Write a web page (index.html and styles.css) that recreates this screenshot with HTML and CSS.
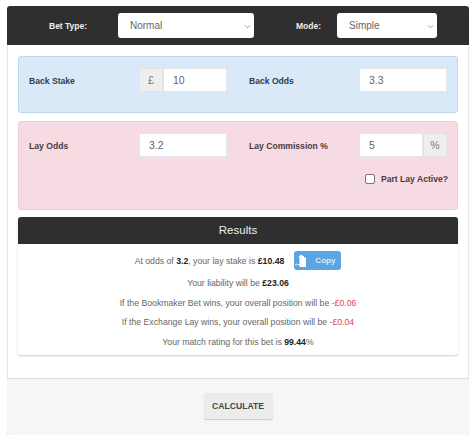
FILE: index.html
```html
<!DOCTYPE html>
<html lang="en">
<head>
    <meta charset="UTF-8">
    <title>Lay Bet Calculator</title>
    <link rel="stylesheet" href="styles.css">
</head>
<body>
    <div class="card">
        <div class="top-bar">
            <span class="top-label bet-label">Bet Type:</span>
            <div class="select bet-select">Normal
                <svg class="chevron" viewBox="0 0 8 5"><path d="M1 1l3 3 3-3" fill="none" stroke="#777" stroke-width="0.8"/></svg>
            </div>
            <span class="top-label mode-label">Mode:</span>
            <div class="select mode-select">Simple
                <svg class="chevron" viewBox="0 0 8 5"><path d="M1 1l3 3 3-3" fill="none" stroke="#777" stroke-width="0.8"/></svg>
            </div>
        </div>

        <div class="content">
            <div class="panel back">
                <div class="row">
                    <label class="field-label first">Back Stake</label>
                    <div class="input-group first-input">
                        <span class="addon addon-left">£</span>
                        <span class="input">10</span>
                    </div>
                    <label class="field-label second">Back Odds</label>
                    <div class="input-group second-input">
                        <span class="input">3.3</span>
                    </div>
                </div>
            </div>

            <div class="panel lay">
                <div class="row">
                    <label class="field-label first">Lay Odds</label>
                    <div class="input-group first-input">
                        <span class="input">3.2</span>
                    </div>
                    <label class="field-label second">Lay Commission %</label>
                    <div class="input-group second-input">
                        <span class="input">5</span>
                        <span class="addon addon-right">%</span>
                    </div>
                </div>
                <div class="part-lay">
                    <span class="checkbox"></span>
                    <b>Part Lay Active?</b>
                </div>
            </div>

            <div class="results">
                <div class="results-head">Results</div>
                <div class="results-body">
                    <p class="stake-line">
                        <span>At odds of <b>3.2</b>, your lay stake is <b>£10.48</b></span>
                        <span class="copy-btn">
                            <svg class="copy-icon" viewBox="0 0 12 12"><path d="M5 0h2.500v1H9v1.500h2V12H4.500v-2H2.500V9h2V2.500H4V1h1z" fill="#fff"/><path d="M0 9.500l1.500-1.200v2.400z" fill="#fff"/></svg>
                            Copy
                        </span>
                    </p>
                    <p>Your liability will be <b>£23.06</b></p>
                    <p>If the Bookmaker Bet wins, your overall position will be <span class="loss">-£0.06</span></p>
                    <p>If the Exchange Lay wins, your overall position will be <span class="loss">-£0.04</span></p>
                    <p>Your match rating for this bet is <b>99.44</b>%</p>
                </div>
            </div>
        </div>

        <div class="footer">
            <span class="calc-btn">CALCULATE</span>
        </div>
    </div>
</body>
</html>
```

FILE: styles.css
```css
* {
    box-sizing: border-box;
}

body {
    margin: 0;
    background-color: #fff;
    font-family: "Liberation Sans", Arial, sans-serif;
    color: #555;
    padding: 6px 5px 0 7px;
}

.card {
    height: 429px;
    background-color: #fff;
    border-radius: 3px;
    box-shadow: inset 1px 0 #e6e6e6, inset -1px 0 #e6e6e6, 0 2px 1px #ddd;
    display: flex;
    flex-direction: column;
}

.top-bar {
    display: flex;
    align-items: center;
    height: 39px;
    background-color: #2f2f2f;
    border-radius: 3px 3px 0 0;
    font-size: 8.5px;
}

.top-label {
    color: #eee;
    font-weight: bold;
}

.bet-label {
    margin-left: 42px;
    width: 69px;
}

.mode-label {
    margin-left: 42px;
    width: 41px;
}

.select {
    position: relative;
    height: 25px;
    line-height: 25px;
    background-color: #fff;
    border-radius: 3px;
    padding-left: 12px;
    font-size: 10px;
    color: #666;
}

.bet-select {
    width: 136px;
}

.mode-select {
    width: 100px;
}

.chevron {
    position: absolute;
    right: 3px;
    top: 11px;
    width: 7px;
    height: 5px;
}

.content {
    flex: 1;
    padding: 11px 11px 0;
}

.panel {
    border-radius: 3px;
    padding: 11px 0 0 10px;
    font-size: 8.6px;
}

.back {
    height: 57px;
    margin-bottom: 8px;
    background-color: #d9e9f8;
    border: 1px solid #bcd7ee;
    color: #2d3e4f;
}

.lay {
    height: 89px;
    margin-bottom: 7px;
    background-color: #f6dbe2;
    border: 1px solid #eccdd6;
    color: #4a3a3f;
}

.row {
    display: flex;
    align-items: center;
}

.field-label {
    font-weight: bold;
    padding-top: 2px;
}

.first {
    width: 110px;
}

.second {
    width: 110px;
    margin-left: 22px;
}

.input-group {
    display: flex;
    width: 88px;
    height: 24px;
    font-size: 10.5px;
}

.input {
    flex: 1;
    background-color: #fff;
    color: #666;
    line-height: 22px;
    padding-left: 9px;
    border: 1px solid #e3e6ea;
}

.addon {
    width: 24px;
    line-height: 22px;
    text-align: center;
    background-color: #eee;
    color: #777;
    border: 1px solid #e3e3e3;
}

.addon-left {
    border-radius: 3px 0 0 3px;
}

.addon-right {
    border-radius: 0 3px 3px 0;
}

.part-lay {
    display: flex;
    justify-content: flex-end;
    align-items: center;
    gap: 6px;
    margin: 17px 9px 0 0;
}

.checkbox {
    width: 10px;
    height: 10px;
    background-color: #fff;
    border: 1px solid #777;
    border-radius: 2px;
}

.results {
    height: 138px;
    border-radius: 3px;
    box-shadow: 0 1px 2px #ccc;
    background-color: #fff;
}

.results-head {
    height: 27px;
    line-height: 27px;
    background-color: #2f2f2f;
    color: #eee;
    text-align: center;
    font-size: 11.5px;
    border-radius: 3px 3px 0 0;
}

.results-body {
    font-size: 8.7px;
    text-align: center;
    color: #666;
    padding-top: 7px;
}

.results-body p {
    margin: 0 0 9.500px;
    line-height: 10px;
}

.results-body b {
    color: #222;
}

.results-body .stake-line {
    display: flex;
    justify-content: center;
    align-items: center;
    gap: 10px;
    height: 19px;
    margin-bottom: 8px;
}

.loss {
    color: #e0444c;
}

.copy-btn {
    display: inline-flex;
    align-items: center;
    gap: 8px;
    width: 47px;
    height: 19px;
    padding-left: 1px;
    background-color: #5aa5e2;
    color: #dcecfa;
    font-weight: bold;
    font-size: 8px;
    border-radius: 3px;
}

.copy-icon {
    width: 12px;
    height: 12px;
}

.footer {
    height: 57px;
    padding-bottom: 2px;
    background-color: #f6f6f6;
    border-top: 1px solid #ddd;
    border-radius: 0 0 3px 3px;
    display: flex;
    justify-content: center;
    align-items: center;
}

.calc-btn {
    width: 69px;
    height: 26px;
    line-height: 26px;
    text-align: center;
    background-color: #ececec;
    color: #444;
    font-weight: bold;
    font-size: 8.600px;
    border-radius: 2px;
    box-shadow: 0 1px 1px #ccc;
}
```
